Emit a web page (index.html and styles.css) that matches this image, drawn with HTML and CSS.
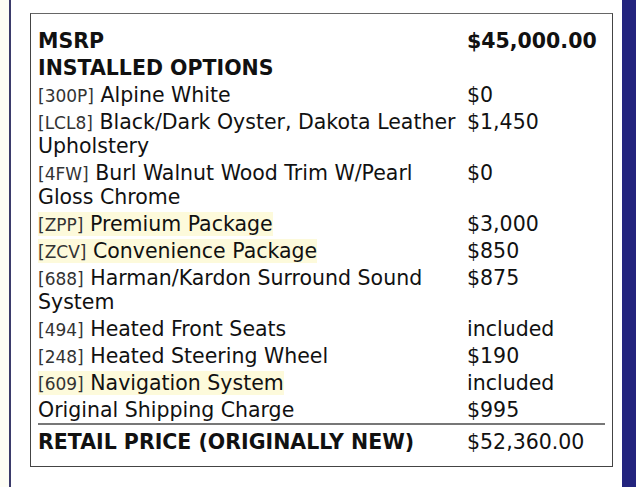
FILE: index.html
```html
<!DOCTYPE html>
<html>
<head>
<meta charset="utf-8">
<link rel="stylesheet" href="styles.css">
</head>
<body>
<div class="page">
  <div class="gutter"></div>
  <div class="rule"></div>
  <main class="content">
    <div class="sticker">
      <table class="prices">
        <tr class="head"><td>MSRP</td><td>$45,000.00</td></tr>
        <tr class="head"><td colspan="2">INSTALLED OPTIONS</td></tr>
        <tr><td><span class="code">[300P]</span> Alpine White</td><td>$0</td></tr>
        <tr><td><span class="code">[LCL8]</span> Black/Dark Oyster, Dakota Leather Upholstery</td><td>$1,450</td></tr>
        <tr><td><span class="code">[4FW]</span> Burl Walnut Wood Trim W/Pearl Gloss Chrome</td><td>$0</td></tr>
        <tr><td><span class="hl"><span class="code">[ZPP]</span> Premium Package</span></td><td>$3,000</td></tr>
        <tr><td><span class="hl"><span class="code">[ZCV]</span> Convenience Package</span></td><td>$850</td></tr>
        <tr><td><span class="code">[688]</span> Harman/Kardon Surround Sound System</td><td>$875</td></tr>
        <tr><td><span class="code">[494]</span> Heated Front Seats</td><td>included</td></tr>
        <tr><td><span class="code">[248]</span> Heated Steering Wheel</td><td>$190</td></tr>
        <tr><td><span class="hl"><span class="code">[609]</span> Navigation System</span></td><td>included</td></tr>
        <tr><td>Original Shipping Charge</td><td>$995</td></tr>
        <tr class="total"><td>RETAIL PRICE (ORIGINALLY NEW)</td><td>$52,360.00</td></tr>
      </table>
    </div>
  </main>
  <div class="sidebar"></div>
</div>
</body>
</html>
```

FILE: styles.css
```css
html, body {
  margin: 0;
  padding: 0;
  background: #ffffff;
}
.page {
  display: flex;
  height: 487px;
  font-family: "DejaVu Sans", sans-serif;
  color: #111;
}
.gutter {
  width: 9px;
  background: #fdfdf5;
}
.rule {
  width: 2px;
  background: #3b3b6b;
}
.content {
  flex: 1;
  padding: 13px 9px 0 19px;
}
.sidebar {
  width: 14px;
  background: #23247e;
}
.sticker {
  border: 1px solid #444;
  border-top-color: #666;
  padding: 13px 7px 10px 7px;
}
.prices {
  width: 100%;
  border-collapse: collapse;
  table-layout: fixed;
  font-size: 20.5px;
  line-height: 24px;
}
.prices td {
  padding: 1.5px 0;
  vertical-align: top;
}
.prices td:first-child {
  width: 429px;
}
.head td {
  font-weight: bold;
}
.code {
  font-size: 17px;
  line-height: 1;
  color: #333;
}
.hl {
  background: #fdfadb;
}
.total td {
  border-top: 2px solid #777;
  padding-top: 5px;
}
.total td:first-child {
  font-weight: bold;
}
```
